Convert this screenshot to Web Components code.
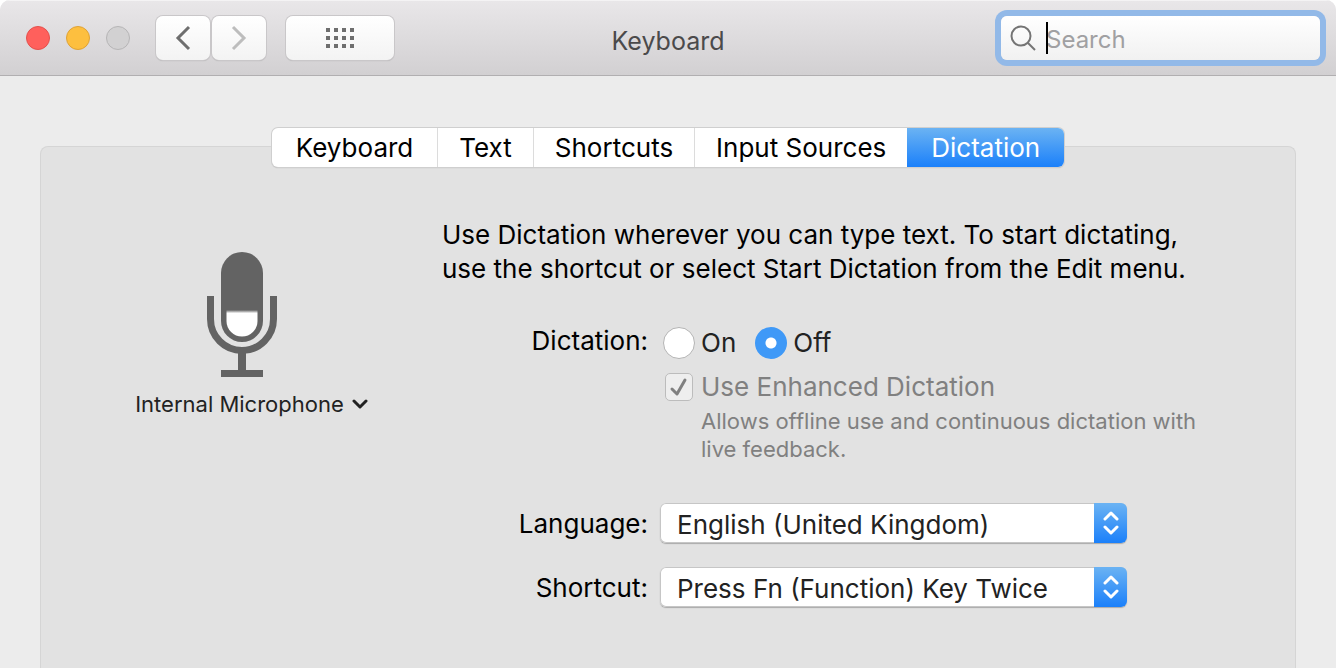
<!DOCTYPE html>
<html lang="en">
<head>
<meta charset="utf-8">
<meta name="viewport" content="width=device-width, initial-scale=1">
<title>Keyboard</title>
<style>
  html, body {
    margin: 0;
    background: #fff;
  }
  body {
    font-family: Inter, Roboto, sans-serif;
    font-size: 26px;
    color: #000;
    --color-window: #ececec;
    --color-panel: #e2e2e2;
    --color-muted: #808080;
    --color-icon: #636363;
    --blue: linear-gradient(#6bb3f3, #1b80fa);
  }
</style>
</head>
<body>
<pref-window>
  <tool-bar slot="toolbar" title-text="Keyboard">
    <nav-buttons slot="start"></nav-buttons>
    <search-field slot="end" placeholder="Search"></search-field>
  </tool-bar>
  <tab-bar slot="tabs">
    <tab-item>Keyboard</tab-item>
    <tab-item>Text</tab-item>
    <tab-item>Shortcuts</tab-item>
    <tab-item>Input Sources</tab-item>
    <tab-item selected>Dictation</tab-item>
  </tab-bar>
  <dictation-panel>
    <mic-source slot="source">Internal Microphone</mic-source>
    <dictation-toggle></dictation-toggle>
    <popup-row label="Language:" value="English (United Kingdom)"></popup-row>
    <popup-row label="Shortcut:" value="Press Fn (Function) Key Twice"></popup-row>
  </dictation-panel>
</pref-window>

<script>
class PrefWindow extends HTMLElement {
  constructor () {
    super()
    this.attachShadow({ mode: 'open' }).innerHTML = `
      <style>
        :host {
          display: flex;
          flex-direction: column;
          min-height: 100vh;
          box-sizing: border-box;
          background: var(--color-window);
          border-radius: 10px 10px 0 0;
          overflow: hidden;
        }
        main {
          flex: 1;
          display: flex;
          flex-direction: column;
          padding: 52px 40px 0;
        }
        ::slotted(tab-bar) {
          align-self: center;
          z-index: 1;
          margin-bottom: -21px;
        }
      </style>
      <slot name="toolbar"></slot>
      <main>
        <slot name="tabs"></slot>
        <slot></slot>
      </main>`
  }
}
customElements.define('pref-window', PrefWindow)

class ToolBar extends HTMLElement {
  constructor () {
    super()
    this.attachShadow({ mode: 'open' })
  }

  connectedCallback () {
    this.shadowRoot.innerHTML = `
      <style>
        :host {
          display: grid;
          grid-template-columns: 1fr auto 1fr;
          align-items: center;
          box-sizing: border-box;
          height: 76px;
          padding: 1px 16px 0;
          background: linear-gradient(#e9e7e9, #d2d0d2);
          border-bottom: 1px solid #b1afb1;
          box-shadow: inset 0 1px #f4f3f4;
        }
        h1 {
          margin: 0;
          padding-top: 5px;
          font-size: 25px;
          font-weight: 400;
          color: #4b4a4b;
        }
        slot[name=end] {
          display: flex;
          justify-content: flex-end;
        }
      </style>
      <slot name="start"></slot>
      <h1>${this.getAttribute('title-text')}</h1>
      <slot name="end"></slot>`
  }
}
customElements.define('tool-bar', ToolBar)

class NavButtons extends HTMLElement {
  constructor () {
    super()
    this.attachShadow({ mode: 'open' }).innerHTML = `
      <style>
        :host {
          display: flex;
          align-items: center;
          padding-left: 10px;
        }
        button {
          padding: 0;
          border: 0;
        }
        .light {
          width: 24px;
          height: 24px;
          margin-right: 16px;
          border-radius: 50%;
          border: 1px solid;
        }
        .close { background: #ff605c; border-color: #e4504c; }
        .min { background: #fdbf3f; border-color: #dfa236; }
        .zoom { background: #d2d1d2; border-color: #b6b5b6; }
        .tool {
          display: flex;
          align-items: center;
          justify-content: center;
          width: 54px;
          height: 44px;
          border-radius: 7px;
          background: linear-gradient(#fff, #f3f3f3);
          box-shadow: 0 0 0 1px #c9c7c9, 0 1px 1px #a5a3a5;
          color: #6e6e6e;
        }
        .back { margin: 0 2px 0 10px; }
        .forward { color: #bdbdbd; }
        .grid { width: 108px; margin-left: 20px; }
      </style>
      <button class="light close" aria-label="Close"></button>
      <button class="light min" aria-label="Minimize"></button>
      <button class="light zoom" aria-label="Zoom" disabled></button>
      <button class="tool back" aria-label="Back">
        <svg width="16" height="26" viewBox="0 0 16 26" fill="none" stroke="currentColor" stroke-width="3"><path d="M14 2 3 13l11 11"/></svg>
      </button>
      <button class="tool forward" aria-label="Forward" disabled>
        <svg width="16" height="26" viewBox="0 0 16 26" fill="none" stroke="currentColor" stroke-width="3"><path d="m2 2 11 11L2 24"/></svg>
      </button>
      <button class="tool grid" aria-label="Show All">
        <svg width="28" height="20" viewBox="0 0 28 20" fill="currentColor"><path d="M0 0h4v4H0zM8 0h4v4H8zM16 0h4v4h-4zM24 0h4v4h-4zM0 8h4v4H0zM8 8h4v4H8zM16 8h4v4h-4zM24 8h4v4h-4zM0 16h4v4H0zM8 16h4v4H8zM16 16h4v4h-4zM24 16h4v4h-4z"/></svg>
      </button>`
  }
}
customElements.define('nav-buttons', NavButtons)

class SearchField extends HTMLElement {
  constructor () {
    super()
    this.attachShadow({ mode: 'open' })
  }

  connectedCallback () {
    const text = this.getAttribute('placeholder')
    this.shadowRoot.innerHTML = `
      <style>
        :host { display: block; }
        label {
          position: relative;
          display: flex;
          align-items: center;
          width: 319px;
          height: 44px;
          box-sizing: border-box;
          padding-left: 9px;
          border-radius: 6px;
          background: linear-gradient(#fff, #f1f1f1);
          box-shadow: 0 0 0 6px #92b9e8;
        }
        input {
          flex: 1;
          min-width: 0;
          margin-left: 10px;
          padding: 2px 0 0;
          border: 0;
          outline: 0;
          background: none;
          font: inherit;
          font-size: 24px;
          caret-color: transparent;
        }
        input::placeholder { color: #a0a0a2; opacity: 1; }
        /* insertion point */
        label::after {
          content: "";
          position: absolute;
          left: 45px;
          top: 6px;
          width: 2px;
          height: 32px;
          background: #000;
        }
      </style>
      <label>
        <svg width="26" height="26" viewBox="0 0 26 26" fill="none" stroke="#747474" stroke-width="2"><circle cx="11" cy="11" r="9.5"/><path d="m18 18 7 7"/></svg>
        <input type="text" placeholder="${text}" aria-label="${text}">
      </label>`
  }
}
customElements.define('search-field', SearchField)

class TabBar extends HTMLElement {
  constructor () {
    super()
    this.attachShadow({ mode: 'open' }).innerHTML = `
      <style>
        :host {
          display: flex;
          height: 39px;
          border-radius: 6px;
          background: #fff;
          box-shadow: 0 0 0 1px #cfcfcf, 0 1px 1px #aaa;
          overflow: hidden;
        }
      </style>
      <slot></slot>`
  }
}
customElements.define('tab-bar', TabBar)

class TabItem extends HTMLElement {
  constructor () {
    super()
    this.attachShadow({ mode: 'open' }).innerHTML = `
      <style>
        :host {
          display: flex;
          border-left: 1px solid #dcdcdc;
        }
        :host(:first-child) { border-left: 0; }
        :host([selected]) {
          border-left: 0;
          background: var(--blue);
        }
        button {
          padding: 0 21px;
          border: 0;
          background: none;
          font: inherit;
          color: #000;
        }
        :host(:first-child) button,
        :host(:last-child) button { padding: 0 24px; }
        :host([selected]) button { color: #fff; }
      </style>
      <button><slot></slot></button>`
  }
}
customElements.define('tab-item', TabItem)

class DictationPanel extends HTMLElement {
  constructor () {
    super()
    this.attachShadow({ mode: 'open' }).innerHTML = `
      <style>
        :host {
          flex: 1;
          display: grid;
          grid-template-columns: 401px 1fr;
          padding-top: 71px;
          border: 1px solid #d5d5d5;
          border-bottom: 0;
          border-radius: 8px 8px 0 0;
          background: var(--color-panel);
        }
        p {
          margin: 0 0 41px;
          line-height: 34px;
        }
      </style>
      <slot name="source"></slot>
      <section>
        <p>Use Dictation wherever you can type text. To start dictating,<br>use the shortcut or select Start Dictation from the Edit menu.</p>
        <slot></slot>
      </section>`
  }
}
customElements.define('dictation-panel', DictationPanel)

class MicSource extends HTMLElement {
  constructor () {
    super()
    this.attachShadow({ mode: 'open' }).innerHTML = `
      <style>
        :host {
          display: flex;
          flex-direction: column;
          align-items: center;
          padding-top: 34px;
        }
        button {
          display: flex;
          align-items: center;
          gap: 8px;
          margin: 12px 0 0 20px;
          padding: 0;
          border: 0;
          background: none;
          font: inherit;
          font-size: 22px;
          line-height: 30px;
          color: #222;
        }
        .mic { fill: none; stroke: var(--color-icon); }
        .body, .base { fill: var(--color-icon); stroke: none; }
        .level { fill: url(#level); stroke: none; }
      </style>
      <svg class="mic" width="70" height="125" viewBox="0 0 70 125">
        <linearGradient id="level" x2="0" y2="1">
          <stop offset="0" stop-color="#636363"/>
          <stop offset=".12" stop-color="#fff"/>
        </linearGradient>
        <rect class="body" x="14" y="0" width="42" height="90" rx="21"/>
        <path class="level" d="M19.500 58h31v11a15.500 15.500 0 0 1-31 0z"/>
        <path d="M3.500 44v23a31.500 31.500 0 0 0 63 0V44" stroke-width="7"/>
        <path class="base" d="M31 100h8v18h17v7H14v-7h17z"/>
      </svg>
      <button>
        <slot></slot>
        <svg width="16" height="12" viewBox="0 0 16 12" fill="none" stroke="#222" stroke-width="3" stroke-linecap="round" stroke-linejoin="round"><path d="m2 3 6 6 6-6"/></svg>
      </button>`
  }
}
customElements.define('mic-source', MicSource)

class DictationToggle extends HTMLElement {
  constructor () {
    super()
    this.attachShadow({ mode: 'open' }).innerHTML = `
      <style>
        :host {
          display: grid;
          grid-template-columns: 206px 1fr;
          column-gap: 15px;
          margin-bottom: 40px;
          line-height: 32px;
        }
        .name {
          text-align: right;
          line-height: 28px;
        }
        .radios {
          display: flex;
          gap: 19px;
          color: #222;
        }
        label {
          display: flex;
          align-items: center;
          gap: 6px;
        }
        input {
          appearance: none;
          margin: 0;
          box-sizing: border-box;
        }
        input[type=radio] {
          width: 32px;
          height: 32px;
          border: 1px solid #b4b4b4;
          border-radius: 50%;
          background: #fff;
        }
        input[type=radio]:checked {
          border: 0;
          background: radial-gradient(circle, #fff 5px, #3f99f7 6px);
        }
        .enhanced, .hint {
          grid-column: 2;
          color: var(--color-muted);
        }
        .enhanced { margin: 12px 0 4px; }
        input[type=checkbox] {
          width: 28px;
          height: 28px;
          margin: 0 2px;
          border: 1px solid #bcbcbc;
          border-radius: 5px;
          background: #eee;
        }
        .box {
          position: relative;
          display: flex;
        }
        .box svg {
          position: absolute;
          inset: 0 2px;
        }
        .hint {
          margin: 0 0 0 38px;
          font-size: 22px;
          line-height: 28px;
        }
      </style>
      <span class="name" id="name">Dictation:</span>
      <div class="radios" role="radiogroup" aria-labelledby="name">
        <label><input type="radio" name="dictation">On</label>
        <label><input type="radio" name="dictation" checked>Off</label>
      </div>
      <label class="enhanced">
        <span class="box">
          <input type="checkbox" checked disabled aria-describedby="hint">
          <svg width="28" height="28" viewBox="0 0 28 28" fill="none" stroke="#808080" stroke-width="3" stroke-linecap="round" stroke-linejoin="round"><path d="m7 16 5 5 8-14"/></svg>
        </span>
        Use Enhanced Dictation
      </label>
      <p class="hint" id="hint">Allows offline use and continuous dictation with<br>live feedback.</p>`
  }
}
customElements.define('dictation-toggle', DictationToggle)

class PopupRow extends HTMLElement {
  constructor () {
    super()
    this.attachShadow({ mode: 'open' })
  }

  connectedCallback () {
    this.shadowRoot.innerHTML = `
      <style>
        :host {
          display: grid;
          grid-template-columns: 206px 467px;
          column-gap: 12px;
          margin-bottom: 24px;
        }
        label {
          text-align: right;
          line-height: 42px;
          height: 40px;
        }
        .popup {
          position: relative;
          display: flex;
          height: 40px;
          border-radius: 6px;
          background: #fff;
          box-shadow: inset 0 0 0 1px #c6c6c6, 0 1px 1px #aaa;
          overflow: hidden;
        }
        select {
          flex: 1;
          appearance: none;
          padding: 2px 40px 0 17px;
          border: 0;
          background: none;
          font: inherit;
          color: #222;
        }
        .arrows {
          position: absolute;
          inset: 0 0 0 auto;
          display: flex;
          align-items: center;
          justify-content: center;
          width: 33px;
          background: var(--blue);
          pointer-events: none;
        }
      </style>
      <label for="popup">${this.getAttribute('label')}</label>
      <div class="popup">
        <select id="popup"><option>${this.getAttribute('value')}</option></select>
        <span class="arrows">
          <svg width="16" height="26" viewBox="0 0 16 26" fill="none" stroke="#fff" stroke-width="3" stroke-linecap="round" stroke-linejoin="round"><path d="m2 9 6-6 6 6M2 17l6 6 6-6"/></svg>
        </span>
      </div>`
  }
}
customElements.define('popup-row', PopupRow)
</script>
</body>
</html>
